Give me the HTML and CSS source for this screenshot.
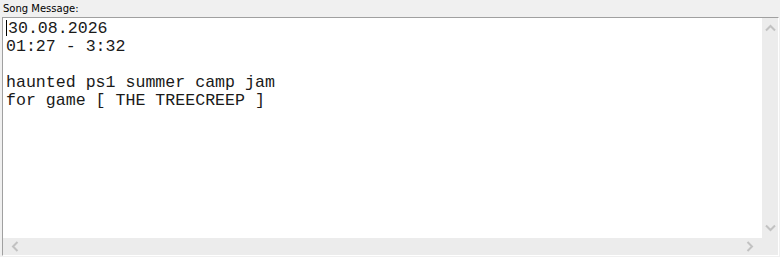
FILE: index.html
```html
<!DOCTYPE html>
<html>
<head>
<meta charset="utf-8">
<link rel="stylesheet" href="styles.css">
</head>
<body>
<div class="panel">
  <div class="label">Song Message:</div>
  <div class="box">
    <div class="text"><span class="caret"></span>30.08.2026
01:27 - 3:32

haunted ps1 summer camp jam
for game [ THE TREECREEP ]</div>
    <div class="vscroll">
      <svg class="arrow" width="11" height="8" viewBox="0 0 11 8"><path d="M1 6.5 L5.5 2 L10 6.5" fill="none" stroke="#c2c2c2" stroke-width="2"/></svg>
      <svg class="arrow" width="11" height="8" viewBox="0 0 11 8"><path d="M1 1.5 L5.5 6 L10 1.5" fill="none" stroke="#c2c2c2" stroke-width="2"/></svg>
    </div>
    <div class="hscroll">
      <svg class="arrow" width="8" height="11" viewBox="0 0 8 11"><path d="M6.5 1 L2 5.5 L6.5 10" fill="none" stroke="#c2c2c2" stroke-width="2"/></svg>
      <svg class="arrow" width="8" height="11" viewBox="0 0 8 11"><path d="M1.5 1 L6 5.5 L1.5 10" fill="none" stroke="#c2c2c2" stroke-width="2"/></svg>
    </div>
    <div class="corner"></div>
  </div>
</div>
</body>
</html>
```
FILE: styles.css
```css
html, body {
  margin: 0;
  padding: 0;
  background: #f0f0f0;
}
.panel {
  width: 780px;
  height: 257px;
  display: flex;
  flex-direction: column;
}
.label {
  font-family: "DejaVu Sans", sans-serif;
  font-size: 10px;
  color: #000;
  padding: 2px 0 0 3px;
  height: 15px;
  box-sizing: border-box;
  line-height: 13px;
}
.box {
  margin: 2px 1px 1px 2px;
  flex: 1;
  display: grid;
  grid-template-columns: 1fr 16px;
  grid-template-rows: 1fr 17px;
  border-top: 1px solid #a0a0a0;
  border-left: 1px solid #a0a0a0;
  border-right: 1px solid #fff;
  border-bottom: 1px solid #fff;
  background: #f0f0f0;
}
.text {
  background: #fff;
  white-space: pre;
  font-family: "Courier New", "Nimbus Mono PS", "FreeMono", "Courier 10 Pitch", "Liberation Mono", monospace;
  font-size: 16.6px;
  line-height: 18px;
  color: #1a1a1a;
  padding: 2px 0 0 3px;
  overflow: hidden;
}
.caret {
  display: inline-block;
  width: 1px;
  height: 16px;
  background: #000;
  vertical-align: -3px;
  margin-right: 1px;
}
.vscroll {
  background: #ececec;
  display: flex;
  flex-direction: column;
  justify-content: space-between;
  align-items: center;
  padding: 6px 0 6px;
}
.hscroll {
  background: #ececec;
  display: flex;
  justify-content: space-between;
  align-items: center;
  padding: 0 8px;
}
.corner {
  background: #ececec;
}
.arrow {
  display: block;
}
```
